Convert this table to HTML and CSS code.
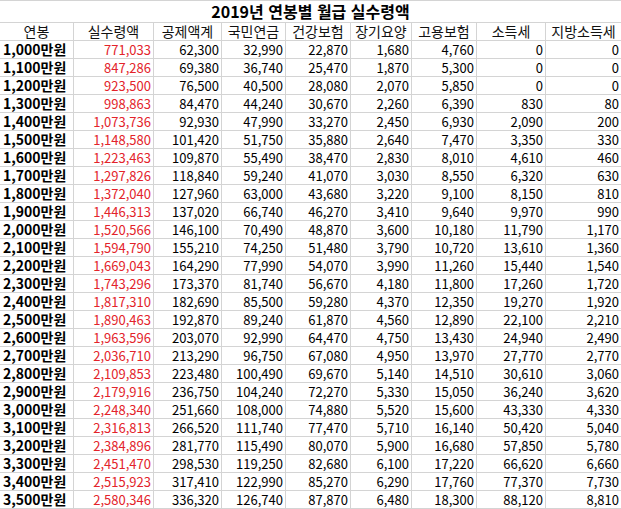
FILE: index.html
```html
<!DOCTYPE html>
<html lang="ko">
<head>
<meta charset="utf-8">
<title>2019년 연봉별 월급 실수령액</title>
<link rel="stylesheet" href="styles.css">
</head>
<body>
<div class="sheet">
  <div class="title">2019년 연봉별 월급 실수령액</div>
  <div class="row head"><div>연봉</div><div>실수령액</div><div>공제액계</div><div>국민연금</div><div>건강보험</div><div>장기요양</div><div>고용보험</div><div>소득세</div><div>지방소득세</div></div>
  <div class="row"><div class="k">1,000만원</div><div class="red">771,033</div><div>62,300</div><div>32,990</div><div>22,870</div><div>1,680</div><div>4,760</div><div>0</div><div>0</div></div>
  <div class="row"><div class="k">1,100만원</div><div class="red">847,286</div><div>69,380</div><div>36,740</div><div>25,470</div><div>1,870</div><div>5,300</div><div>0</div><div>0</div></div>
  <div class="row"><div class="k">1,200만원</div><div class="red">923,500</div><div>76,500</div><div>40,500</div><div>28,080</div><div>2,070</div><div>5,850</div><div>0</div><div>0</div></div>
  <div class="row"><div class="k">1,300만원</div><div class="red">998,863</div><div>84,470</div><div>44,240</div><div>30,670</div><div>2,260</div><div>6,390</div><div>830</div><div>80</div></div>
  <div class="row"><div class="k">1,400만원</div><div class="red">1,073,736</div><div>92,930</div><div>47,990</div><div>33,270</div><div>2,450</div><div>6,930</div><div>2,090</div><div>200</div></div>
  <div class="row"><div class="k">1,500만원</div><div class="red">1,148,580</div><div>101,420</div><div>51,750</div><div>35,880</div><div>2,640</div><div>7,470</div><div>3,350</div><div>330</div></div>
  <div class="row"><div class="k">1,600만원</div><div class="red">1,223,463</div><div>109,870</div><div>55,490</div><div>38,470</div><div>2,830</div><div>8,010</div><div>4,610</div><div>460</div></div>
  <div class="row"><div class="k">1,700만원</div><div class="red">1,297,826</div><div>118,840</div><div>59,240</div><div>41,070</div><div>3,030</div><div>8,550</div><div>6,320</div><div>630</div></div>
  <div class="row"><div class="k">1,800만원</div><div class="red">1,372,040</div><div>127,960</div><div>63,000</div><div>43,680</div><div>3,220</div><div>9,100</div><div>8,150</div><div>810</div></div>
  <div class="row"><div class="k">1,900만원</div><div class="red">1,446,313</div><div>137,020</div><div>66,740</div><div>46,270</div><div>3,410</div><div>9,640</div><div>9,970</div><div>990</div></div>
  <div class="row"><div class="k">2,000만원</div><div class="red">1,520,566</div><div>146,100</div><div>70,490</div><div>48,870</div><div>3,600</div><div>10,180</div><div>11,790</div><div>1,170</div></div>
  <div class="row"><div class="k">2,100만원</div><div class="red">1,594,790</div><div>155,210</div><div>74,250</div><div>51,480</div><div>3,790</div><div>10,720</div><div>13,610</div><div>1,360</div></div>
  <div class="row"><div class="k">2,200만원</div><div class="red">1,669,043</div><div>164,290</div><div>77,990</div><div>54,070</div><div>3,990</div><div>11,260</div><div>15,440</div><div>1,540</div></div>
  <div class="row"><div class="k">2,300만원</div><div class="red">1,743,296</div><div>173,370</div><div>81,740</div><div>56,670</div><div>4,180</div><div>11,800</div><div>17,260</div><div>1,720</div></div>
  <div class="row"><div class="k">2,400만원</div><div class="red">1,817,310</div><div>182,690</div><div>85,500</div><div>59,280</div><div>4,370</div><div>12,350</div><div>19,270</div><div>1,920</div></div>
  <div class="row"><div class="k">2,500만원</div><div class="red">1,890,463</div><div>192,870</div><div>89,240</div><div>61,870</div><div>4,560</div><div>12,890</div><div>22,100</div><div>2,210</div></div>
  <div class="row"><div class="k">2,600만원</div><div class="red">1,963,596</div><div>203,070</div><div>92,990</div><div>64,470</div><div>4,750</div><div>13,430</div><div>24,940</div><div>2,490</div></div>
  <div class="row"><div class="k">2,700만원</div><div class="red">2,036,710</div><div>213,290</div><div>96,750</div><div>67,080</div><div>4,950</div><div>13,970</div><div>27,770</div><div>2,770</div></div>
  <div class="row"><div class="k">2,800만원</div><div class="red">2,109,853</div><div>223,480</div><div>100,490</div><div>69,670</div><div>5,140</div><div>14,510</div><div>30,610</div><div>3,060</div></div>
  <div class="row"><div class="k">2,900만원</div><div class="red">2,179,916</div><div>236,750</div><div>104,240</div><div>72,270</div><div>5,330</div><div>15,050</div><div>36,240</div><div>3,620</div></div>
  <div class="row"><div class="k">3,000만원</div><div class="red">2,248,340</div><div>251,660</div><div>108,000</div><div>74,880</div><div>5,520</div><div>15,600</div><div>43,330</div><div>4,330</div></div>
  <div class="row"><div class="k">3,100만원</div><div class="red">2,316,813</div><div>266,520</div><div>111,740</div><div>77,470</div><div>5,710</div><div>16,140</div><div>50,420</div><div>5,040</div></div>
  <div class="row"><div class="k">3,200만원</div><div class="red">2,384,896</div><div>281,770</div><div>115,490</div><div>80,070</div><div>5,900</div><div>16,680</div><div>57,850</div><div>5,780</div></div>
  <div class="row"><div class="k">3,300만원</div><div class="red">2,451,470</div><div>298,530</div><div>119,250</div><div>82,680</div><div>6,100</div><div>17,220</div><div>66,620</div><div>6,660</div></div>
  <div class="row"><div class="k">3,400만원</div><div class="red">2,515,923</div><div>317,410</div><div>122,990</div><div>85,270</div><div>6,290</div><div>17,760</div><div>77,370</div><div>7,730</div></div>
  <div class="row"><div class="k">3,500만원</div><div class="red">2,580,346</div><div>336,320</div><div>126,740</div><div>87,870</div><div>6,480</div><div>18,300</div><div>88,120</div><div>8,810</div></div>
</div>
</body>
</html>
```

FILE: styles.css
```css
html, body {
  margin: 0;
  padding: 0;
  background: #ffffff;
}

body {
  font-family: "Noto Sans CJK KR", "Noto Sans", sans-serif;
  color: #000000;
}

.sheet {
  width: 621px;
  display: flex;
  flex-direction: column;
  gap: 1px;
  padding: 1px 0;
  background: #d4d4d4;
}

.title {
  height: 21px;
  line-height: 21px;
  background: #ffffff;
  text-align: center;
  font-weight: bold;
  font-size: 16px;
}

.row {
  display: grid;
  grid-template-columns: 73px 79px 67px 63px 64px 60px 64px 68px 75px;
  column-gap: 1px;
  height: 17px;
}

.row > div {
  background: #ffffff;
  font-size: 13px;
  line-height: 17px;
  text-align: right;
  padding-right: 2px;
  white-space: nowrap;
}

.row.head > div {
  text-align: center;
  padding-right: 0;
  font-size: 14px;
  color: #111111;
}

.row > .k {
  text-align: left;
  padding-left: 3px;
  padding-right: 0;
  font-weight: bold;
  font-size: 14px;
}

.row > .red {
  color: #e3232a;
}
```
